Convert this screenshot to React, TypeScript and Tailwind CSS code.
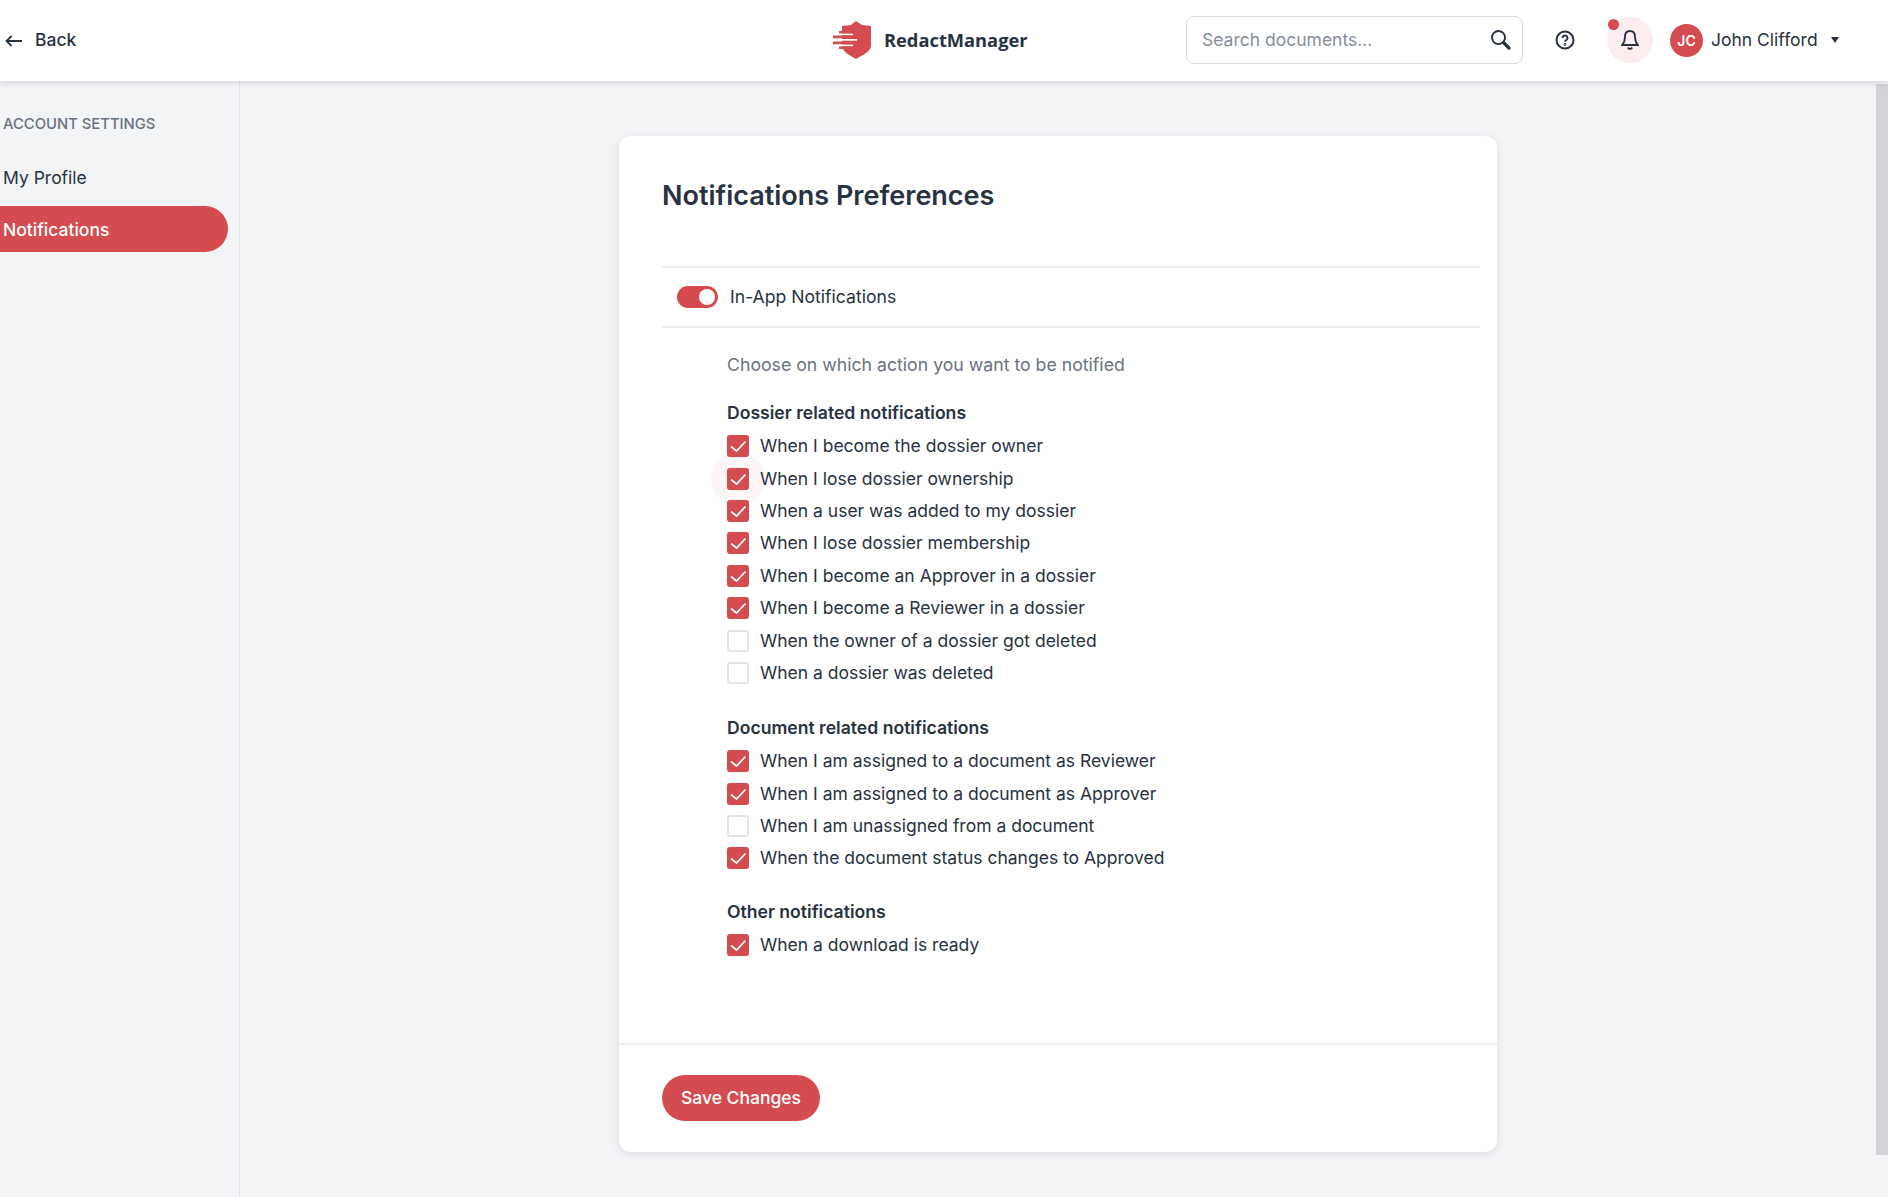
const dossier: [string, boolean][] = [
  ["When I become the dossier owner", true],
  ["When I lose dossier ownership", true],
  ["When a user was added to my dossier", true],
  ["When I lose dossier membership", true],
  ["When I become an Approver in a dossier", true],
  ["When I become a Reviewer in a dossier", true],
  ["When the owner of a dossier got deleted", false],
  ["When a dossier was deleted", false],
];
const documents: [string, boolean][] = [
  ["When I am assigned to a document as Reviewer", true],
  ["When I am assigned to a document as Approver", true],
  ["When I am unassigned from a document", false],
  ["When the document status changes to Approved", true],
];
const other: [string, boolean][] = [["When a download is ready", true]];

function Row({ label, on, halo }: { label: string; on: boolean; halo?: boolean }) {
  return (
    <div className="flex h-[32.4px] items-center gap-[11px]">
      <div className="relative h-[22px] w-[22px] shrink-0">
        {halo && <div className="absolute -left-[16px] -top-[16px] z-0 h-[54px] w-[54px] rounded-full bg-[#fdf6f6]" />}
        {on ? (
          <div className="relative z-[1] h-[22px] w-[22px] rounded-[3px] bg-[#d44c50]">
            <svg width="22" height="22" viewBox="0 0 22 22" fill="none">
              <path d="M4 11.500 L9.500 16 L18.500 6.500" stroke="white" strokeWidth="1.700" />
            </svg>
          </div>
        ) : (
          <div className="relative z-[1] h-[22px] w-[22px] rounded-[3px] border-2 border-[#e2e4e9] bg-white" />
        )}
      </div>
      <span className="relative z-[1] text-[17.5px] leading-[24px] text-[#283241]">{label}</span>
    </div>
  );
}

function Group({ title, items, className }: { title: string; items: [string, boolean][]; className?: string }) {
  return (
    <div className={className}>
      <div className="mb-[1px] flex h-[31px] items-center text-[17.6px] font-semibold text-[#283241]">{title}</div>
      {items.map(([l, v], i) => (
        <Row key={l} label={l} on={v} halo={title.startsWith("Dossier") && i === 1} />
      ))}
    </div>
  );
}

export default function App() {
  return (
    <div className="relative flex h-[1197px] flex-col overflow-hidden bg-[#f3f4f6] font-['Inter',sans-serif] text-[#283241]">
      <header className="relative z-10 flex h-[81px] shrink-0 items-center bg-white pb-[1px] pl-[5px] shadow-[0_2px_6px_rgba(40,50,65,0.14)]">
        <div className="flex w-[828px] shrink-0 items-center gap-[13px] pt-[1px] text-[17.5px] font-medium">
          <svg width="17" height="12" viewBox="0 0 17 12" fill="none" stroke="#283241" strokeWidth="1.800">
            <path d="M17 6H1.500M6.500 1 1.500 6l5 5" />
          </svg>
          Back
        </div>
        <div className="flex w-[353px] shrink-0 items-center gap-[13px]">
          <svg width="38" height="38" viewBox="0 0 38 38">
            <path fill="#d44c50" d="M23 0l6 4 9 1v20c0 5-8 9-15 13C16 34 9 30 9 25V5l9-1z" />
            <rect x="6" y="10" width="13" height="2.600" fill="#d44c50" />
            <rect x="6" y="12.600" width="14" height="1.700" fill="white" />
            <rect x="0" y="14.500" width="20" height="2.800" fill="#d44c50" />
            <rect x="0" y="18" width="24" height="1.700" fill="white" />
            <rect x="0" y="20.500" width="20" height="2.800" fill="#d44c50" />
            <rect x="6" y="23.600" width="14" height="1.700" fill="white" />
            <rect x="6" y="25.400" width="13" height="2.600" fill="#d44c50" />
          </svg>
          <span className="font-['Open_Sans',sans-serif] text-[18.3px] font-bold text-[#283241]">RedactManager</span>
        </div>
        <div className="flex h-[48px] w-[337px] shrink-0 items-center justify-between rounded-[8px] border border-[#d8d9de] bg-white pl-[15px] pr-[10px]">
          <span className="pt-[1px] text-[17.5px] text-[#868e99]">Search documents...</span>
          <svg width="22" height="22" viewBox="0 0 22 22" fill="none" stroke="#283241">
            <circle cx="8.500" cy="8.500" r="6.500" strokeWidth="1.900" />
            <path d="M13.500 13.500l5.500 5.500" strokeWidth="3.200" strokeLinecap="round" />
          </svg>
        </div>
        <svg className="ml-[32px] shrink-0" width="20" height="20" viewBox="0 0 20 20" fill="none" stroke="#283241" strokeWidth="2">
          <circle cx="10" cy="10" r="8.500" />
          <path d="M7.500 8a2.500 2.500 0 1 1 3.900 2c-.9.600-1.400 1-1.400 1.800" />
          <circle cx="10" cy="14.500" r=".4" />
        </svg>
        <div className="relative ml-[32px] flex h-[46px] w-[46px] shrink-0 items-center justify-center rounded-full bg-[#fbeced]">
          <span className="absolute left-[1px] top-[2px] h-[11px] w-[11px] rounded-full bg-[#d44c50]" />
          <svg width="18" height="20" viewBox="0 0 18 20" fill="none" stroke="#283241" strokeWidth="1.800">
            <path d="M9 1C5.700 1 4 3.600 4 6.800c0 3.700-.8 6-2.900 8.200h15.800C14.800 12.800 14 10.500 14 6.800 14 3.600 12.300 1 9 1z" />
            <path d="M6.800 17.500c.5.900 1.200 1.400 2.200 1.400s1.700-.5 2.200-1.400" />
          </svg>
        </div>
        <div className="ml-[17px] flex h-[33px] w-[33px] shrink-0 items-center justify-center rounded-full bg-[#d44c50] text-[14px] font-semibold text-white">JC</div>
        <span className="ml-[8px] whitespace-nowrap text-[17.5px] text-[#283241]">John Clifford</span>
        <span className="ml-[13px] h-0 w-0 border-x-[4px] border-t-[6px] border-x-transparent border-t-[#283241]" />
      </header>
      <div className="flex flex-1">
        <aside className="w-[240px] shrink-0 border-r border-[#e2e4e9] pr-[11px] pt-[33px]">
          <div className="mb-[21px] flex h-[20px] items-center pl-[3px] text-[14.8px] font-medium uppercase text-[#6b7280]">Account settings</div>
          <div className="flex h-[46px] items-center pl-[3px] text-[17.5px] font-normal text-[#283241]">My Profile</div>
          <div className="mt-[5px] flex h-[46px] items-center rounded-r-full bg-[#d44c50] pl-[3px] pt-[2px] text-[17.5px] font-medium text-white">Notifications</div>
        </aside>
        <main className="flex-1 pl-[379px] pt-[55px]">
          <section className="flex h-[1016px] w-[878px] flex-col rounded-[12px] bg-white shadow-[0_2px_8px_rgba(40,50,65,0.12)]">
            <div className="flex-1 pl-[43px] pr-[17px]">
              <h1 className="flex h-[130px] items-center pb-[10px] text-[27px] font-semibold text-[#283241]">Notifications Preferences</h1>
              <div className="flex h-[62px] items-center gap-[12px] border-y-2 border-[#eceef1] pl-[15px]">
                <div className="flex h-[22px] w-[41px] items-center justify-end rounded-full bg-[#d44c50] pr-[3px]">
                  <span className="h-[16px] w-[16px] rounded-full bg-white" />
                </div>
                <span className="text-[17.6px] text-[#283241]">In-App Notifications</span>
              </div>
              <div className="pl-[65px] pt-[23px]">
                <div className="mb-[19px] flex h-[28px] items-center text-[17.7px] text-[#6b7280]">Choose on which action you want to be notified</div>
                <Group title="Dossier related notifications" items={dossier} />
                <Group title="Document related notifications" items={documents} className="mt-[24px]" />
                <Group title="Other notifications" items={other} className="mt-[22px]" />
              </div>
            </div>
            <div className="flex h-[109px] items-start border-t-2 border-[#eceef1] pl-[43px] pt-[30px]">
              <button className="flex h-[46px] w-[158px] items-center justify-center rounded-full bg-[#d44c50] text-[17.5px] font-medium text-white">Save Changes</button>
            </div>
          </section>
        </main>
      </div>
      <div className="absolute right-0 top-[84px] h-[1071px] w-[12px] bg-[#d2d3d8]" />
    </div>
  );
}
